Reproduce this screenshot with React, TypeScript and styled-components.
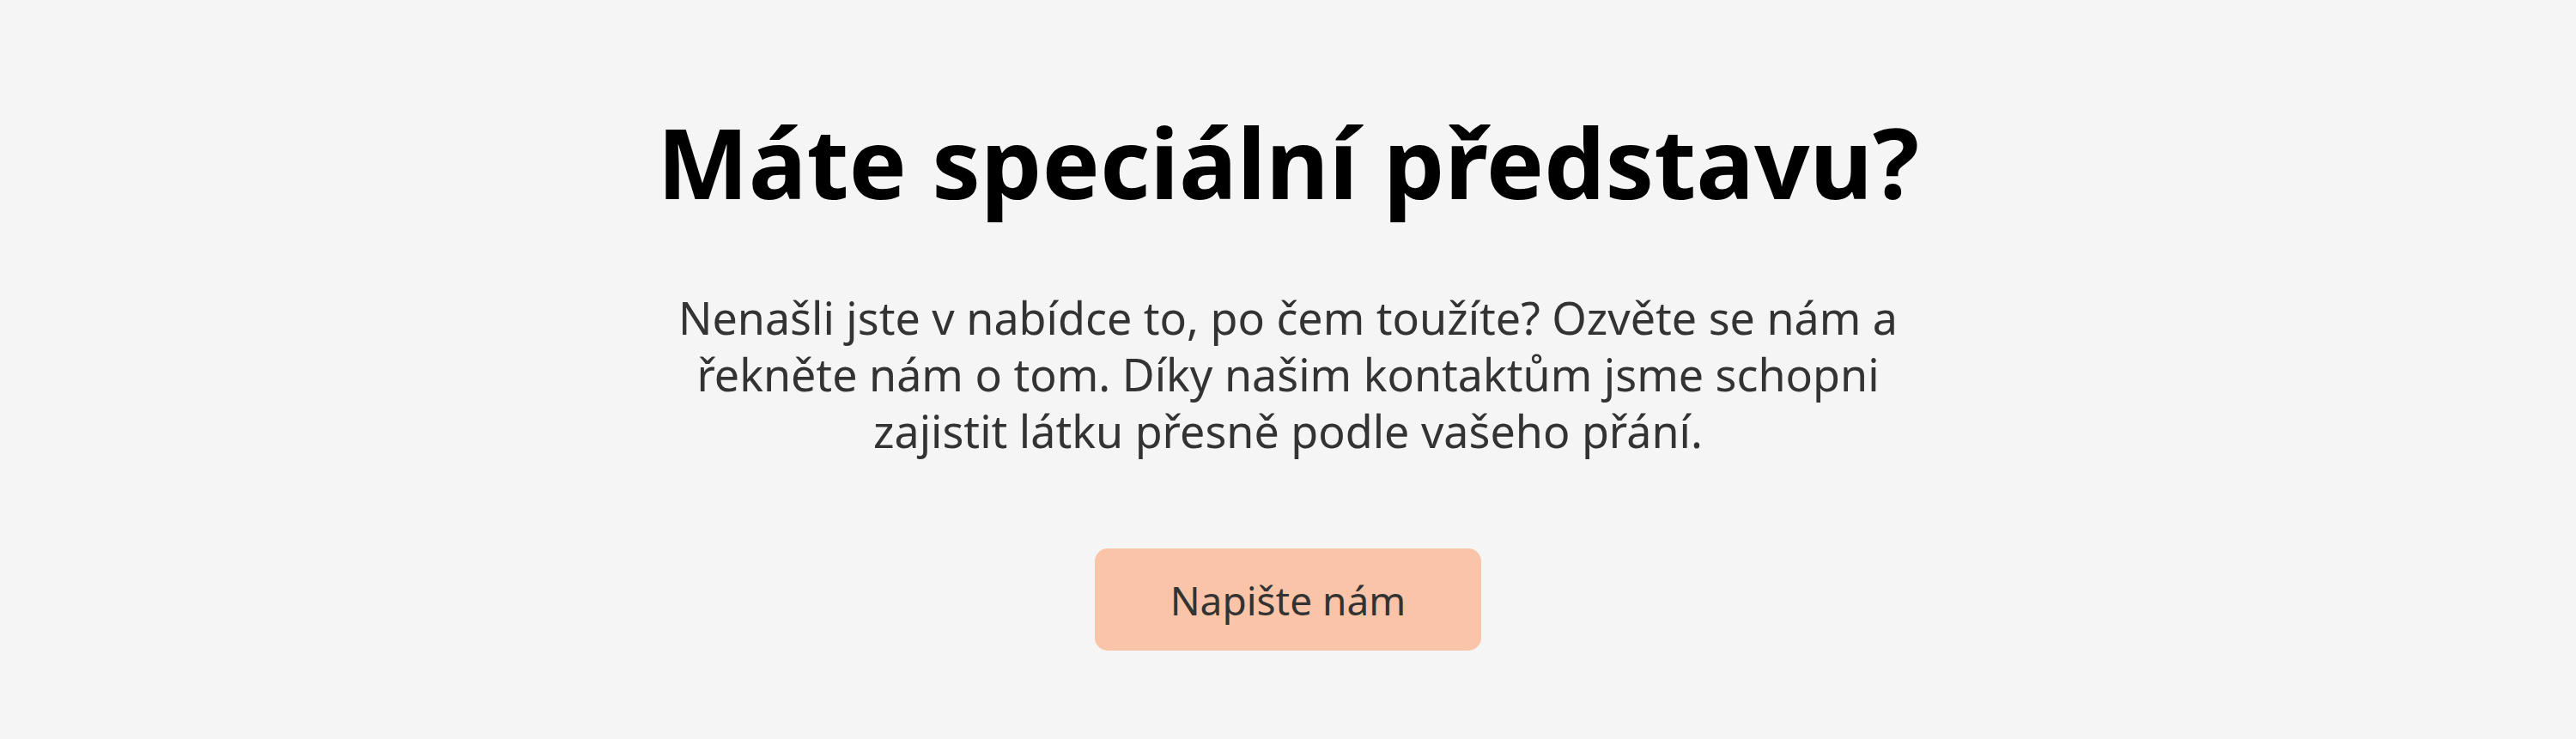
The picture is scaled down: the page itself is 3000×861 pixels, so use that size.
import styled, { createGlobalStyle } from 'styled-components'

const GlobalStyle = createGlobalStyle`
  html, body {
    margin: 0;
    padding: 0;
    background: #f5f5f5;
  }
  body {
    font-family: 'Noto Sans', 'DejaVu Sans', sans-serif;
  }
`

const Section = styled.section`
  min-height: 861px;
  box-sizing: border-box;
  padding: 118px 0 0;
  display: flex;
  flex-direction: column;
  align-items: center;
  background: #f5f5f5;
`

const Title = styled.h2`
  margin: 0;
  font-size: 113px;
  line-height: 140px;
  font-weight: 700;
  color: #000;
  text-align: center;
`

const Lead = styled.p`
  margin: 79px 0 0;
  font-size: 52px;
  line-height: 66px;
  font-weight: 400;
  color: #333;
  text-align: center;
`

const Button = styled.a`
  margin-top: 104px;
  width: 450px;
  height: 119px;
  display: flex;
  justify-content: center;
  align-items: center;
  background: #f9c4a8;
  border-radius: 15px;
  font-size: 46px;
  color: #333;
  text-decoration: none;
  cursor: pointer;
`

export default function App() {
  return (
    <>
      <GlobalStyle />
      <Section>
        <Title>Máte speciální představu?</Title>
        <Lead>
          Nenašli jste v nabídce to, po čem toužíte? Ozvěte se nám a
          <br />
          řekněte nám o tom. Díky našim kontaktům jsme schopni
          <br />
          zajistit látku přesně podle vašeho přání.
        </Lead>
        <Button href="#kontakt">Napište nám</Button>
      </Section>
    </>
  )
}
